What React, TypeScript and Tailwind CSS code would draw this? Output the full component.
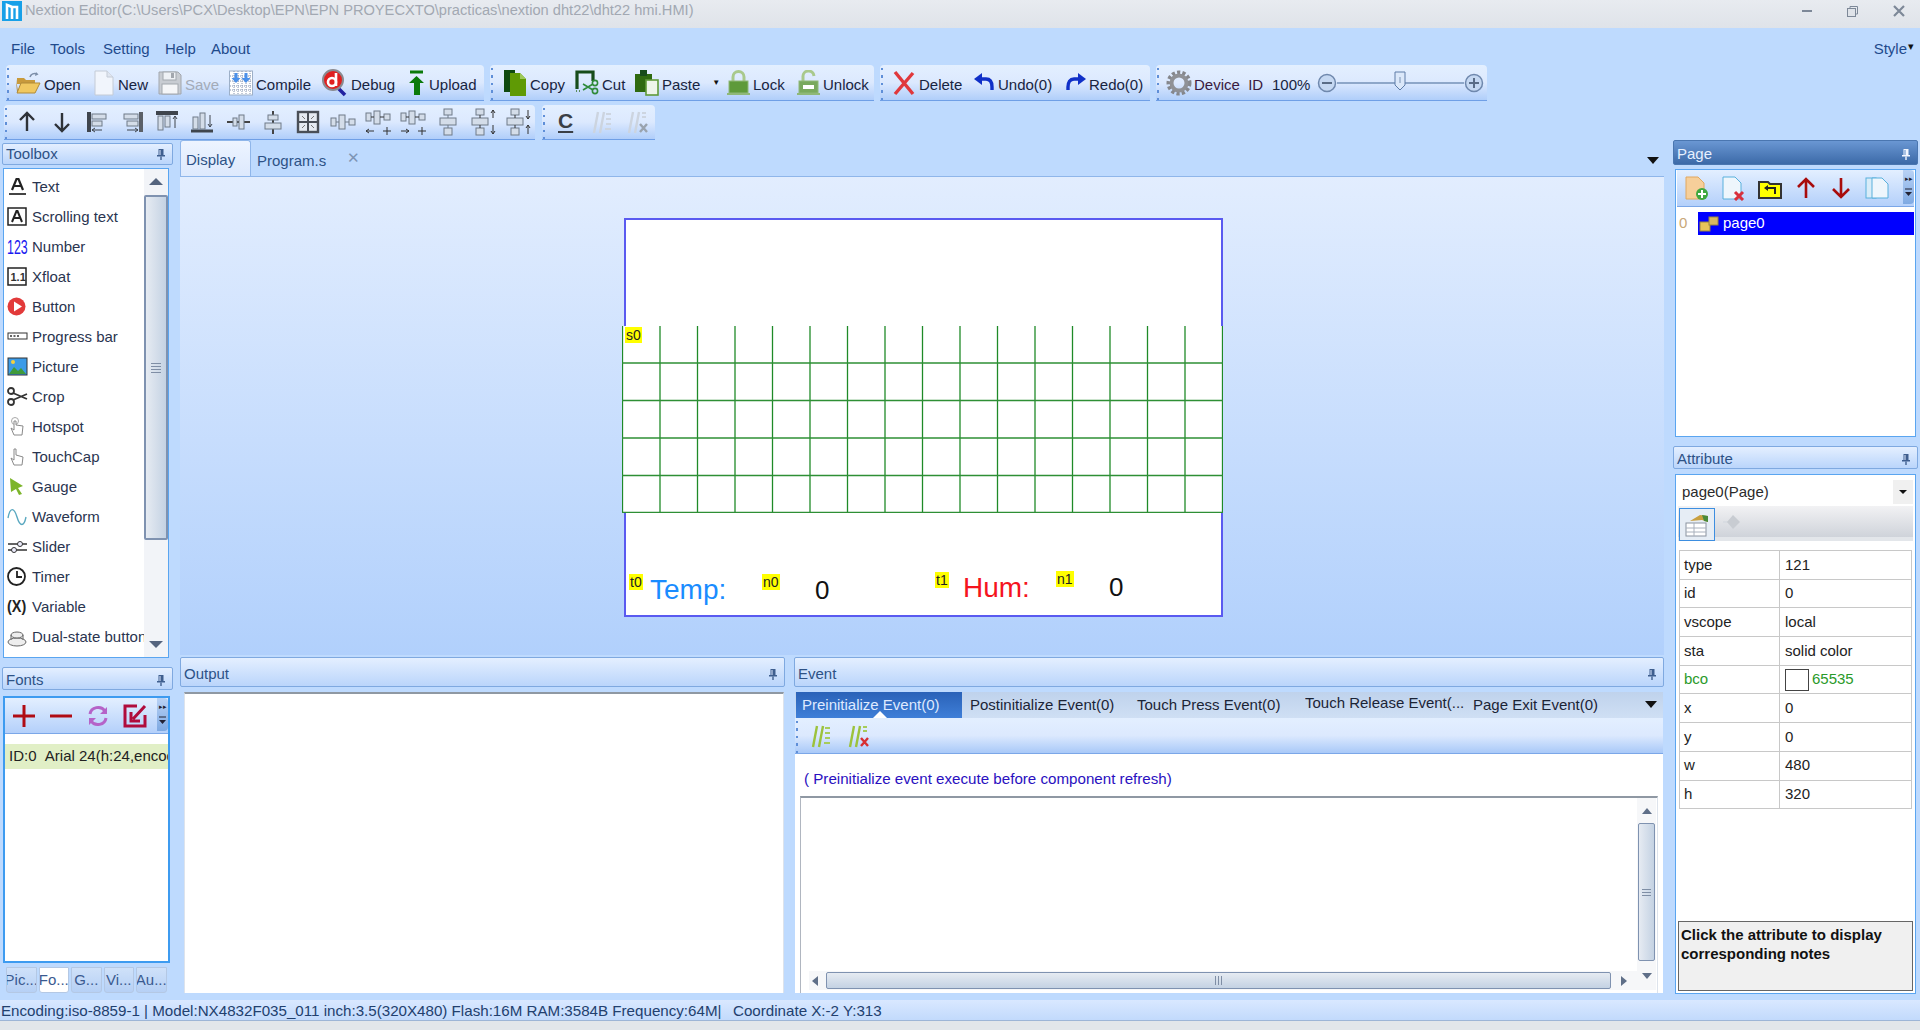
import type { ReactNode } from 'react';

const FONT = 'font-["Liberation_Sans",Arial,sans-serif]';

// ---- small helpers ----

function Svg({ w = 24, h = 24, vb, children, className }: { w?: number; h?: number; vb?: string; children: ReactNode; className?: string }) {
  return (
    <svg width={w} height={h} viewBox={vb ?? `0 0 ${w} ${h}`} fill="none" className={`shrink-0 ${className ?? ''}`}>
      {children}
    </svg>
  );
}

function Pin({ light }: { light?: boolean }) {
  const c = light ? '#f2f6ff' : '#3f5f8f';
  return (
    <Svg w={10} h={13}>
      <path d="M2.5 1h5v6h1.5v1.5H1V7h1.5z" fill={c} />
      <path d="M4 2v5" stroke={light ? '#5f8cc8' : '#dfeaff'} />
      <path d="M5 8.5V12" stroke={c} strokeWidth="1.4" />
    </Svg>
  );
}

function Grip() {
  return (
    <div className="flex flex-col gap-[5px] pt-[3px] pl-[1px] w-[6px] shrink-0">
      <i className="block w-[2px] h-[3px] bg-[#5f8fd8]" />
      <i className="block w-[2px] h-[3px] bg-[#5f8fd8]" />
      <i className="block w-[2px] h-[3px] bg-[#5f8fd8]" />
      <i className="block w-[2px] h-[3px] bg-[#5f8fd8]" />
      <i className="block w-[2px] h-[3px] bg-[#5f8fd8]" />
    </div>
  );
}

function Overflow() {
  return (
    <div className="absolute right-0 top-0 bottom-[2px] w-[11px] bg-gradient-to-b from-[#b9d2f5] to-[#7ea9e2] flex flex-col items-center pt-[5px] gap-[6px] rounded-r-sm">
      <span className="text-[7px] leading-[7px] text-[#223]">▸▸</span>
      <Svg w={7} h={9}>
        <path d="M0 1h7" stroke="#223" />
        <path d="M0 4h7L3.5 8z" fill="#223" />
      </Svg>
    </div>
  );
}

function PanelHead({ title, dark, className }: { title: string; dark?: boolean; className: string }) {
  return (
    <div
      className={`flex items-center justify-between pl-[3px] pr-[6px] rounded-[2px] border text-[15px] ${className} ${
        dark
          ? 'bg-gradient-to-b from-[#6a97d3] to-[#3c6aa8] border-[#4a76b0] text-[#e6f0ff]'
          : 'bg-gradient-to-b from-[#e4efff] to-[#bad5fb] border-[#7fa9e0] text-[#2d5286]'
      }`}
    >
      <span>{title}</span>
      <Pin light={dark} />
    </div>
  );
}

// ---- main toolbar icons ----

const OpenIcon = (
  <Svg w={26} h={24}>
    <path d="M15 6c1-3 4-4 7-3" stroke="#7c8ea8" strokeWidth="1.6" />
    <path d="M21 1l2.5 2.5L20 5z" fill="#7c8ea8" />
    <path d="M2 7h7l2 2h9v4H2z" fill="#c89a3c" />
    <path d="M2 21L1 8l2 13z" fill="#a87c28" />
    <path d="M6 12h19l-5 10H2z" fill="#f0c860" stroke="#b08a38" />
  </Svg>
);
const NewIcon = (
  <Svg w={22} h={28}>
    <path d="M2 2h12l6 6v18H2z" fill="#f1f5fc" stroke="#c4cbd6" />
    <path d="M14 2v6h6" fill="#e0e6f0" stroke="#c4cbd6" />
  </Svg>
);
const SaveIcon = (
  <Svg w={24} h={26}>
    <path d="M1 2h19l3 3v19H1z" fill="#c8ccd2" stroke="#a2a7ae" />
    <rect x="5" y="2" width="13" height="8" fill="#eef1f5" stroke="#a2a7ae" />
    <rect x="13" y="3" width="3" height="5" fill="#a2a7ae" />
    <rect x="4" y="14" width="16" height="10" fill="#f5f6f8" stroke="#a2a7ae" />
  </Svg>
);
const CompileIcon = (
  <Svg w={24} h={26}>
    <rect x="0.5" y="1" width="23" height="24" fill="#fff" stroke="#9db0c8" />
    <path d="M1 6h22M1 11h22M1 16h22M1 20h22M5 1v24M9 1v24M13 1v24M17 1v24M21 1v24" stroke="#8494b0" strokeDasharray="1 1" />
    <path d="M5.500 3h3v5h3l-4.500 5-4.500-5h3z" fill="#4a90ea" />
    <path d="M15.500 3h3v5h3l-4.500 5-4.500-5h3z" fill="#4a90ea" />
  </Svg>
);
const DebugIcon = (
  <Svg w={26} h={28}>
    <path d="M16 19l7 7" stroke="#2222a0" strokeWidth="3.5" />
    <circle cx="11" cy="11" r="10" fill="#e02020" stroke="#8a8a90" strokeWidth="2" />
    <circle cx="10" cy="13" r="4" stroke="#fff" strokeWidth="2.6" />
    <path d="M14 4v13" stroke="#fff" strokeWidth="2.6" />
  </Svg>
);
const UploadIcon = (
  <Svg w={18} h={26}>
    <path d="M2 2h13" stroke="#0a7a0a" strokeWidth="3" />
    <path d="M8.5 6L16 13h-4v12H6V13H1z" fill="#0a7a0a" />
  </Svg>
);
const CopyIcon = (
  <Svg w={24} h={28}>
    <rect x="1" y="1" width="11" height="22" fill="#0f4a10" />
    <path d="M7 4h10l6 6v17H7z" fill="#5f9a05" />
    <path d="M17 4v6h6" fill="#9ec95a" />
  </Svg>
);
const CutIcon = (
  <Svg w={24} h={26}>
    <path d="M2 19V2h16v9" stroke="#174c1a" strokeWidth="3.2" />
    <path d="M1 21h6" stroke="#5a8a5a" strokeDasharray="1 2" strokeWidth="2" />
    <circle cx="20" cy="21" r="2.6" stroke="#2f8a3a" strokeWidth="1.6" />
    <circle cx="20" cy="13" r="2.6" stroke="#2f8a3a" strokeWidth="1.6" />
    <path d="M18 14L8 20M18 20L8 14" stroke="#2f8a3a" strokeWidth="1.6" />
  </Svg>
);
const PasteIcon = (
  <Svg w={25} h={27}>
    <rect x="1" y="5" width="17" height="18" fill="#2f6a10" />
    <rect x="6" y="1" width="7" height="6" fill="#174c1a" />
    <rect x="12" y="11" width="12" height="15" fill="#eef5ea" stroke="#5f9a3a" strokeWidth="1.6" />
  </Svg>
);
const LockIcon = (
  <Svg w={23} h={26}>
    <path d="M6 12V7a5.5 5.5 0 0 1 11 0v5" stroke="#a9c98c" strokeWidth="3" />
    <rect x="2" y="11" width="19" height="12" fill="#5e9a3a" stroke="#8fb878" />
    <path d="M0 24h23" stroke="#8fb878" strokeWidth="2" />
  </Svg>
);
const UnlockIcon = (
  <Svg w={23} h={26}>
    <path d="M6 12V7a5.5 5.5 0 0 1 11-1" stroke="#a9c98c" strokeWidth="3" />
    <rect x="2" y="11" width="19" height="12" fill="#79a95e" stroke="#8fb878" />
    <rect x="6" y="15" width="11" height="4" fill="#fff" />
    <path d="M0 24h23" stroke="#8fb878" strokeWidth="2" />
  </Svg>
);
const DeleteIcon = (
  <Svg w={24} h={26}>
    <path d="M3 2l18 22M21 3L3 24" stroke="#e0383c" strokeWidth="3.4" />
  </Svg>
);
const UndoIcon = (
  <Svg w={21} h={21}>
    <path d="M5 7h7c4 0 6 3 6 8v3" stroke="#1030c8" strokeWidth="3.4" />
    <path d="M8 1v12L0 7z" fill="#1030c8" />
  </Svg>
);
const RedoIcon = (
  <Svg w={21} h={21}>
    <path d="M16 7H9C5 7 3 10 3 15v3" stroke="#1030c8" strokeWidth="3.4" />
    <path d="M13 1v12l8-6z" fill="#1030c8" />
  </Svg>
);
const GearIcon = (
  <Svg w={26} h={26}>
    <circle cx="13" cy="13" r="10" stroke="#85878c" strokeWidth="5" strokeDasharray="3 2" />
    <circle cx="13" cy="13" r="7.5" stroke="#8f9196" strokeWidth="4" />
  </Svg>
);

// ---- layout toolbar icons, all drawn on one 30x30 box ----

const BOX = { fill: '#d4dde9', stroke: '#6f7a88' };

function AlignIcon({ children }: { children: ReactNode }) {
  return <Svg w={30} h={30}>{children}</Svg>;
}

const layoutIcons: ReactNode[] = [
  <path key="a" d="M15 6v18M8 13l7-7 7 7" stroke="#2e3238" strokeWidth="2.4" />,
  <path key="b" d="M15 6v18M8 17l7 7 7-7" stroke="#2e3238" strokeWidth="2.4" />,
  <g key="c"><path d="M7 5v20" stroke="#3f454d" strokeWidth="4" /><rect x="10" y="7" width="14" height="5" {...BOX} /><rect x="10" y="14" width="10" height="5" {...BOX} /><path d="M10 23h10M10 23l3-2M10 23l3 2" stroke="#3f454d" /></g>,
  <g key="d"><path d="M24 5v20" stroke="#5b6068" strokeWidth="4" /><rect x="7" y="7" width="14" height="5" {...BOX} /><rect x="10" y="14" width="11" height="5" {...BOX} /><path d="M10 23h11M21 23l-3-2M21 23l-3 2" stroke="#3f454d" /></g>,
  <g key="e"><path d="M4 6h22" stroke="#3f454d" strokeWidth="4" /><rect x="6" y="9" width="5" height="14" {...BOX} /><rect x="13" y="9" width="5" height="11" {...BOX} /><path d="M23 9v12M23 9l-2 3M23 9l2 3" stroke="#3f454d" /></g>,
  <g key="f"><path d="M4 24h22" stroke="#3f454d" strokeWidth="3" /><rect x="6" y="10" width="5" height="12" {...BOX} /><rect x="13" y="6" width="5" height="16" {...BOX} /><path d="M23 8v12M23 20l-2-3M23 20l2-3" stroke="#3f454d" /></g>,
  <g key="g"><path d="M4 15h23" stroke="#444" strokeWidth="2" /><rect x="10" y="11" width="4" height="8" {...BOX} /><rect x="16" y="8" width="5" height="14" {...BOX} /></g>,
  <g key="h"><path d="M15 4v23" stroke="#444" strokeWidth="2" /><rect x="10" y="8" width="10" height="5" {...BOX} /><rect x="7" y="16" width="16" height="6" {...BOX} /></g>,
  <g key="i"><rect x="5" y="5" width="20" height="20" fill="#e6ebf2" stroke="#4a4f57" strokeWidth="2.4" /><path d="M15 6v18M6 15h18" stroke="#4a4f57" strokeWidth="2" /><path d="M9 9l3 3M21 9l-3 3M9 21l3-3M21 21l-3-3" stroke="#777" /></g>,
  <g key="j"><rect x="3" y="11" width="5" height="8" {...BOX} /><rect x="11" y="8" width="6" height="14" {...BOX} /><rect x="21" y="12" width="6" height="6" {...BOX} /><path d="M8 15h3M17 15h4" stroke="#6f7a88" /></g>,
  <g key="k"><rect x="3" y="6" width="5" height="8" {...BOX} /><rect x="11" y="4" width="6" height="13" {...BOX} /><rect x="21" y="7" width="6" height="6" {...BOX} /><path d="M8 10h3M17 10h4M3 24h8M3 24l3-2M3 24l3 2M20 24h8M24 20v8" stroke="#333" /></g>,
  <g key="l"><rect x="3" y="6" width="5" height="8" {...BOX} /><rect x="11" y="4" width="6" height="13" {...BOX} /><rect x="21" y="7" width="6" height="6" {...BOX} /><path d="M8 10h3M17 10h4M3 24h8M11 24l-3-2M11 24l-3 2M20 24h8M24 20v8" stroke="#333" /></g>,
  <g key="m"><rect x="11" y="2" width="8" height="6" {...BOX} /><rect x="7" y="11" width="16" height="7" {...BOX} /><rect x="11" y="21" width="8" height="7" {...BOX} /><path d="M15 8v3M15 18v3" stroke="#6f7a88" /></g>,
  <g key="n"><rect x="8" y="2" width="8" height="6" {...BOX} /><rect x="4" y="11" width="16" height="7" {...BOX} /><rect x="8" y="21" width="8" height="7" {...BOX} /><path d="M12 8v3M12 18v3M25 3v8M25 3l-2 3M25 3l2 3M25 18v9M25 27l-2-3M25 27l2-3" stroke="#333" /></g>,
  <g key="o"><rect x="8" y="2" width="8" height="6" {...BOX} /><rect x="4" y="11" width="16" height="7" {...BOX} /><rect x="8" y="21" width="8" height="7" {...BOX} /><path d="M12 8v3M12 18v3M25 3v9M25 12l-2-3M25 12l2-3M25 18v9M25 18l-2 3M25 18l2 3" stroke="#333" /></g>,
];

function CommentIcon({ off, clear }: { off?: boolean; clear?: boolean }) {
  const a = off ? '#ccd4df' : '#9cc23c';
  const b = off ? '#cdd5e0' : '#a7cc5a';
  return (
    <Svg w={26} h={26}>
      <path d="M6 24L10 3M12 24L16 3" stroke={a} strokeWidth="2.4" />
      {clear ? (
        <>
          <path d="M19 4h4M19 8h4" stroke={b} strokeWidth="2" />
          <path d="M17 15l7 8M24 15l-7 8" stroke={off ? '#9aa3ae' : '#d83030'} strokeWidth="2.4" />
        </>
      ) : (
        <path d="M18 5h5M18 10h5M18 15h5M17 20h6" stroke={b} strokeWidth="2" />
      )}
    </Svg>
  );
}

// ---- toolbox icons ----

const toolIcons: Record<string, ReactNode> = {
  Text: <Svg w={22} h={20}><path d="M5 13L9.500 2h2L16 13M7 9h7" stroke="#222" strokeWidth="2.2" /><path d="M2 17h17" stroke="#444" strokeWidth="2" /></Svg>,
  'Scrolling text': <Svg w={22} h={20}><rect x="1" y="1" width="18" height="17" stroke="#222" strokeWidth="1.5" /><path d="M5 15L9.500 4h1L15 15M7 11h6" stroke="#222" strokeWidth="2" /></Svg>,
  Number: <span className="w-[22px] shrink-0 text-[20px] leading-5 text-[#1a1af0] scale-x-[0.62] origin-left whitespace-nowrap">123</span>,
  Xfloat: <Svg w={22} h={20}><rect x="1" y="1" width="18" height="17" fill="#fff" stroke="#222" strokeWidth="1.5" /><text x="3.5" y="14" fontSize="11" fontWeight="700" fill="#333" fontFamily="Liberation Sans">1.1</text></Svg>,
  Button: <Svg w={22} h={20}><circle cx="9.500" cy="9.500" r="9" fill="#e23a3a" /><path d="M7 4.500l8 5-8 5z" fill="#fff" /></Svg>,
  'Progress bar': <Svg w={22} h={20}><rect x="1" y="6" width="19" height="6" fill="#fff" stroke="#333" /><path d="M3 9h10" stroke="#333" strokeDasharray="2 1.500" strokeWidth="1.500" /></Svg>,
  Picture: <Svg w={22} h={20}><rect x="1" y="1" width="19" height="17" fill="#3b9be8" stroke="#333" /><path d="M2 17l5-7 4 4 3-3 5 6z" fill="#3f9a3a" /><circle cx="6" cy="5" r="2" fill="#f4d03f" /></Svg>,
  Crop: <Svg w={22} h={20}><circle cx="4" cy="4" r="3" stroke="#333" strokeWidth="1.800" /><circle cx="4" cy="15" r="3" stroke="#333" strokeWidth="1.800" /><path d="M6 6l14 6M6 13l14-6" stroke="#333" strokeWidth="1.800" /></Svg>,
  Hotspot: <Svg w={22} h={20}><circle cx="8" cy="4" r="3.500" stroke="#a8a8a8" /><path d="M7 4v9l-3-2 3 7h8l1-9-7-1V4z" fill="#fff" stroke="#8a8a8a" /></Svg>,
  TouchCap: <Svg w={22} h={20}><path d="M7 2v11l-3-2 3 7h8l1-8-7-2V2z" fill="#fff" stroke="#8a8a8a" /></Svg>,
  Gauge: <Svg w={22} h={20}><path d="M3 1l13 8-5 2 4 6-3 1-3-6-5 3z" fill="#7cb52a" /></Svg>,
  Waveform: <Svg w={22} h={20}><path d="M1 11C3 0 7 0 10 10s7 10 9 0" stroke="#5aa8c0" strokeWidth="1.400" /></Svg>,
  Slider: <Svg w={22} h={20}><path d="M1 7h19M1 13h19" stroke="#333" strokeWidth="1.400" /><circle cx="13" cy="7" r="2.500" fill="#eef" stroke="#333" /><circle cx="7" cy="13" r="2.500" fill="#eef" stroke="#333" /></Svg>,
  Timer: <Svg w={22} h={20}><circle cx="9.500" cy="9.500" r="8.500" stroke="#222" strokeWidth="1.800" /><path d="M10 4v6h5" stroke="#222" strokeWidth="1.800" /></Svg>,
  Variable: <span className="w-[22px] shrink-0 text-[16px] leading-5 font-bold text-[#222] scale-x-[0.9] origin-left whitespace-nowrap">(X)</span>,
  'Dual-state button': <Svg w={22} h={20}><ellipse cx="10" cy="15" rx="9" ry="4" fill="#eee" stroke="#666" /><ellipse cx="10" cy="8" rx="6" ry="3" fill="#eee" stroke="#666" /><path d="M4 8v5M16 8v5" stroke="#666" /></Svg>,
};

// ---- bars ----

function Toolbar({ children, className }: { children: ReactNode; className: string }) {
  return (
    <div className={`flex items-stretch rounded-t-[4px] bg-gradient-to-b from-[#e3efff] via-[#dce9fe] to-[#b0cefa] border-b border-[#6f9fe6] ${className}`}>
      {children}
    </div>
  );
}

function TbItem({ icon, label, w, off, extra }: { icon: ReactNode; label: string; w: string; off?: boolean; extra?: ReactNode }) {
  return (
    <div className={`flex items-center gap-[3px] ${w}`}>
      {icon}
      <span className={`pt-[5px] ${off ? 'text-[#a3abb8]' : 'text-[#182440]'}`}>{label}</span>
      {extra}
    </div>
  );
}

function TitleBar() {
  return (
    <div className="h-[28px] shrink-0 flex items-center pb-[6px] bg-gradient-to-b from-[#e8ebf0] to-[#dfe3e9] text-[14.650px] text-[#a2a8b2]">
      <Svg w={22} h={24} className="ml-[1px]">
        <rect x="1" y="2" width="20" height="20" fill="#18a0e8" />
        <path d="M6 20V6l5 2v12M11 8h5v12" stroke="#fff" strokeWidth="2.6" />
      </Svg>
      <span className="ml-[2px] whitespace-nowrap">Nextion Editor(C:\Users\PCX\Desktop\EPN\EPN PROYECXTO\practicas\nextion dht22\dht22 hmi.HMI)</span>
      <div className="ml-auto flex items-center gap-[35px] pr-[15px]">
        <i className="block w-[10px] h-[2px] bg-[#7d8898]" />
        <Svg w={11} h={11}>
          <rect x="0.500" y="2.500" width="8" height="8" fill="#dfe3e9" stroke="#7d8898" />
          <path d="M3 2.500V.500h7.500V8H8.500" stroke="#7d8898" />
        </Svg>
        <Svg w={12} h={12}>
          <path d="M1 1l10 10M11 1L1 11" stroke="#7d8898" strokeWidth="2.200" />
        </Svg>
      </div>
    </div>
  );
}

function MenuBar() {
  return (
    <div className="h-[37px] shrink-0 flex items-center pl-[11px] pr-[5px] text-[15px] text-[#1f4a8c] pt-[5px]">
      <span className="w-[39px]">File</span>
      <span className="w-[53px]">Tools</span>
      <span className="w-[62px]">Setting</span>
      <span className="w-[46px]">Help</span>
      <span>About</span>
      <span className="ml-auto">Style</span>
      <span className="text-[11px] text-[#111] -mt-[5px] ml-[1px] mr-[1px]">▾</span>
    </div>
  );
}

function MainTools() {
  return (
    <div className="h-[36px] shrink-0 flex gap-[6px] pl-[6px] text-[15px]">
      <Toolbar className="w-[478px]">
        <Grip />
        <div className="flex items-center pl-[3px]">
          <TbItem icon={OpenIcon} label="Open" w="w-[78px]" />
          <TbItem icon={NewIcon} label="New" w="w-[65px]" />
          <TbItem icon={SaveIcon} label="Save" w="w-[71px]" off />
          <TbItem icon={CompileIcon} label="Compile" w="w-[93px]" />
          <TbItem icon={DebugIcon} label="Debug" w="w-[86px]" />
          <TbItem icon={UploadIcon} label="Upload" w="w-[72px]" />
        </div>
      </Toolbar>
      <Toolbar className="w-[384px]">
        <Grip />
        <div className="flex items-center pl-[7px]">
          <TbItem icon={CopyIcon} label="Copy" w="w-[72px]" />
          <TbItem icon={CutIcon} label="Cut" w="w-[59px]" />
          <TbItem
            icon={PasteIcon}
            label="Paste"
            w="w-[93px]"
            extra={<span className="ml-[9px] text-[8px] text-[#111]">▼</span>}
          />
          <TbItem icon={LockIcon} label="Lock" w="w-[70px]" />
          <TbItem icon={UnlockIcon} label="Unlock" w="w-[72px]" />
        </div>
      </Toolbar>
      <Toolbar className="w-[270px]">
        <Grip />
        <div className="flex items-center pl-[6px]">
          <TbItem icon={DeleteIcon} label="Delete" w="w-[82px]" />
          <TbItem icon={UndoIcon} label="Undo(0)" w="w-[91px]" />
          <TbItem icon={RedoIcon} label="Redo(0)" w="w-[82px]" />
        </div>
      </Toolbar>
      <Toolbar className="w-[331px]">
        <Grip />
        <div className="flex items-center pl-[4px] flex-1 text-[#182440]">
          <div className="flex items-center w-[106px]">
            {GearIcon}
            <span className="ml-[2px] pt-[5px] text-[#3a1a40]">Device&nbsp;&nbsp;ID</span>
          </div>
          <span className="pt-[5px]">100%</span>
          <Slider />
        </div>
      </Toolbar>
    </div>
  );
}

function ZoomBtn({ plus }: { plus?: boolean }) {
  return (
    <Svg w={20} h={20}>
      <circle cx="10" cy="10" r="8.500" fill="#c5d8f2" stroke="#6f88ad" strokeWidth="1.500" />
      <path d={plus ? 'M5 10h10M10 5v10' : 'M5 10h10'} stroke="#5a6c86" strokeWidth="2" />
    </Svg>
  );
}

function Slider() {
  return (
    <div className="flex items-center ml-[7px] relative">
      <ZoomBtn />
      <div className="w-[127px] h-[2px] bg-[#8ea7c9]" />
      <ZoomBtn plus />
      <svg width="12" height="20" viewBox="0 0 12 20" className="absolute left-[77px] top-[-2px]">
        <path d="M1 1h10v13l-5 5-5-5z" fill="#dbe8fa" stroke="#5f7da8" />
        <path d="M6 6v6" stroke="#7d94b5" />
      </svg>
    </div>
  );
}

function LayoutTools() {
  return (
    <div className="h-[35px] shrink-0 mt-[4px] flex gap-[7px] pl-[4px]">
      <Toolbar className="w-[531px]">
        <Grip />
        <div className="flex items-center pl-[2px] gap-[5.100px]">
          {layoutIcons.map((icon, i) => (
            <AlignIcon key={i}>{icon}</AlignIcon>
          ))}
        </div>
      </Toolbar>
      <Toolbar className="w-[113px]">
        <Grip />
        <div className="flex items-center pl-[10px]">
          <span className="w-[30px] -mt-[2px] text-[21px] font-bold text-[#3a3f46] underline underline-offset-[3px]">C</span>
          <CommentIcon off />
          <span className="w-[9px]" />
          <CommentIcon off clear />
        </div>
      </Toolbar>
    </div>
  );
}

// ---- left column ----

const TOOLS = ['Text', 'Scrolling text', 'Number', 'Xfloat', 'Button', 'Progress bar', 'Picture', 'Crop', 'Hotspot', 'TouchCap', 'Gauge', 'Waveform', 'Slider', 'Timer', 'Variable', 'Dual-state button'];

function Toolbox() {
  return (
    <div className="h-[490px] ml-[3px] mt-[3px] w-[166px] border border-[#5aa5f0] bg-white flex overflow-hidden text-[15px] text-[#2a3550]">
      <div className="w-[140px] pt-[3px] pl-[3px] overflow-hidden shrink-0">
        {TOOLS.map((t) => (
          <div key={t} className="h-[30px] flex items-center whitespace-nowrap">
            {toolIcons[t]}
            <span className="ml-[3px]">{t}</span>
          </div>
        ))}
      </div>
      <div className="flex-1 flex flex-col items-center bg-[#f2f4f8] py-[9px]">
        <i className="block border-x-[7px] border-x-transparent border-b-[7px] border-b-[#55647e]" />
        <div className="w-[24px] h-[345px] mt-[10px] rounded-[2px] border-2 border-[#7f92b0] bg-gradient-to-r from-[#e6ebf2] to-[#c4d2e3] flex flex-col items-center justify-center gap-[2px]">
          <i className="block w-[10px] h-px bg-[#7f8ea5]" />
          <i className="block w-[10px] h-px bg-[#7f8ea5]" />
          <i className="block w-[10px] h-px bg-[#7f8ea5]" />
          <i className="block w-[10px] h-px bg-[#7f8ea5]" />
        </div>
        <i className="mt-auto block border-x-[7px] border-x-transparent border-t-[7px] border-t-[#55647e]" />
      </div>
    </div>
  );
}

function Fonts() {
  return (
    <div className="ml-[3px] mt-[6px] w-[167px] h-[267px] border-2 border-[#3d9bf0] bg-white flex flex-col">
      <div className="h-[36px] shrink-0 relative flex items-center gap-[13px] pl-[7px] bg-gradient-to-b from-[#e3efff] to-[#b4d0fa] border-b border-[#7ba7e8]">
        <Svg w={24} h={24}><path d="M12 1v22M1 12h22" stroke="#b00c14" strokeWidth="3" /></Svg>
        <Svg w={24} h={24}><path d="M1 12h22" stroke="#b00c14" strokeWidth="3" /></Svg>
        <Svg w={24} h={24}>
          <path d="M4 10c1-7 11-9 15-3M20 14c-1 7-11 9-15 3" stroke="#b563c8" strokeWidth="3" />
          <path d="M21 3v7h-7M3 21v-7h7" fill="#b563c8" />
        </Svg>
        <Svg w={24} h={24}>
          <path d="M14 2H2v20h20V11" stroke="#b00c3c" strokeWidth="3" />
          <path d="M22 2L10 15M8 8v9h9" stroke="#b00c3c" strokeWidth="3" />
        </Svg>
        <Overflow />
      </div>
      <div className="mt-[10px] h-[25px] bg-[#e1efc6] flex items-center pl-[4px] text-[15px] text-[#222] whitespace-nowrap overflow-hidden">
        ID:0&nbsp;&nbsp;Arial 24(h:24,encoding:iso
      </div>
    </div>
  );
}

function FontTabs() {
  const tabs = ['Pic...', 'Fo...', 'G...', 'Vi...', 'Au...'];
  return (
    <div className="ml-[6px] mt-[4px] h-[27px] flex gap-[2px] text-[15px] text-[#3a5a90]">
      {tabs.map((t) => (
        <div
          key={t}
          className={`w-[30.500px] h-[26px] rounded-b-[3px] border border-[#b4c8e4] flex items-center justify-center overflow-hidden ${
            t === 'Fo...' ? 'bg-white' : 'bg-gradient-to-b from-[#cfe1f9] to-[#b6d0f5]'
          }`}
        >
          {t}
        </div>
      ))}
    </div>
  );
}

function LeftColumn() {
  return (
    <div className="w-[180px] shrink-0 pt-[3px]">
      <PanelHead title="Toolbox" className="ml-[2px] w-[171px] h-[22px]" />
      <Toolbox />
      <PanelHead title="Fonts" className="ml-[2px] mt-[9px] w-[171px] h-[23px] pt-[3px]" />
      <Fonts />
      <FontTabs />
    </div>
  );
}

// ---- canvas ----

function Tag({ text, className }: { text: string; className: string }) {
  return (
    <span className={`absolute bg-[#ffff00] text-[14px] leading-[16px] px-[1px] text-[#222] ${className}`}>{text}</span>
  );
}

function Waveform() {
  const xs = Array.from({ length: 17 }, (_, i) => 0.5 + i * 37.5);
  const ys = [37, 74.5, 112, 149.5, 186.5];
  return (
    <svg width="601" height="187" viewBox="0 0 601 187" className="absolute left-[-4px] top-[106px] bg-white">
      {xs.map((x) => (
        <path key={x} d={`M${x} 0V187`} stroke="#1f8a28" strokeWidth="1.300" />
      ))}
      {ys.map((y) => (
        <path key={y} d={`M0 ${y}H601`} stroke="#2e8f35" strokeWidth="1.300" />
      ))}
    </svg>
  );
}

function Canvas() {
  return (
    <div className="relative ml-[444px] mt-[41px] w-[599px] h-[399px] bg-white border-2 border-[#5a5af0]">
      <Waveform />
      <Tag text="s0" className="left-[-1px] top-[107px]" />
      <Tag text="t0" className="left-[3px] top-[354px]" />
      <span className="absolute left-[24px] top-[353px] text-[28px] leading-[34px] text-[#1a8cff]">Temp:</span>
      <Tag text="n0" className="left-[136px] top-[354px]" />
      <span className="absolute left-[189px] top-[355px] text-[26px] leading-[30px] text-[#111]">0</span>
      <Tag text="t1" className="left-[309px] top-[352px]" />
      <span className="absolute left-[337px] top-[351px] text-[28px] leading-[34px] text-[#f5141e]">Hum:</span>
      <Tag text="n1" className="left-[430px] top-[351px]" />
      <span className="absolute left-[483px] top-[352px] text-[26px] leading-[30px] text-[#111]">0</span>
    </div>
  );
}

function CenterTabs() {
  return (
    <div className="h-[37px] shrink-0 pt-[1px] flex items-end border-b border-[#8fb6ea] relative text-[15px] text-[#2d5286]">
      <div className="w-[71px] h-[36px] rounded-t-[3px] border border-b-0 border-[#8fb6ea] bg-gradient-to-b from-[#edf4ff] to-[#dde9fd] flex items-center pl-[5px] pt-[3px]">
        Display
      </div>
      <span className="ml-[6px] pb-[4px]">Program.s</span>
      <span className="ml-[21px] pb-[7px] text-[#7d94b5]">✕</span>
      <i className="absolute right-[5px] top-[17px] block border-x-[6px] border-x-transparent border-t-[7px] border-t-[#111]" />
    </div>
  );
}

// ---- output and event ----

function Output() {
  return (
    <div className="w-[605px] shrink-0 flex flex-col">
      <PanelHead title="Output" className="h-[30px] pt-[5px]" />
      <div className="ml-[4px] mt-[5px] w-[600px] h-[301px] bg-white border-t-2 border-x border-[#8f98a3] border-x-[#dde3ec]" />
    </div>
  );
}

function EventTabs() {
  return (
    <div className="h-[26px] flex items-center bg-gradient-to-b from-[#bfd2ec] to-[#cfdff4] text-[15px] text-[#1b2436] relative">
      <div className="ml-[1px] w-[166px] h-[26px] bg-gradient-to-b from-[#2a62b8] to-[#3f7fd8] text-[#dfeaff] pl-[6px] flex items-center relative">
        Preinitialize Event(0)
        <i className="absolute left-[77px] bottom-0 block border-x-[7px] border-x-transparent border-b-[7px] border-b-white" />
      </div>
      <span className="ml-[8px] w-[167px]">Postinitialize Event(0)</span>
      <span className="w-[168px]">Touch Press Event(0)</span>
      <span className="w-[168px] -mt-[3px] whitespace-nowrap overflow-hidden">Touch Release Event(...</span>
      <span>Page Exit Event(0)</span>
      <i className="absolute right-[6px] top-[9px] block border-x-[6px] border-x-transparent border-t-[7px] border-t-[#111]" />
    </div>
  );
}

function EditorBox() {
  return (
    <div className="ml-[5px] mt-[7px] w-[858px] h-[197px] border-t-2 border-l border-r border-[#8f98a3] border-l-[#b0b6c0] border-r-[#dde3ec] relative flex flex-col">
      <div className="absolute right-[1px] top-0 bottom-[3px] w-[19px] flex flex-col items-center pt-[10px] bg-[#f6f7f9]">
        <i className="block border-x-[5px] border-x-transparent border-b-[6px] border-b-[#5f6f88]" />
        <div className="mt-[9px] w-[17px] h-[138px] rounded-[2px] border border-[#7f92b0] bg-gradient-to-r from-[#e6ebf2] to-[#c4d2e3] flex flex-col items-center justify-center gap-[2px]">
          <i className="block w-[9px] h-px bg-[#7f8ea5]" />
          <i className="block w-[9px] h-px bg-[#7f8ea5]" />
          <i className="block w-[9px] h-px bg-[#7f8ea5]" />
        </div>
        <i className="mt-[12px] block border-x-[5px] border-x-transparent border-t-[6px] border-t-[#5f6f88]" />
      </div>
      <div className="mt-auto mb-[3px] ml-[8px] w-[828px] h-[19px] flex items-center bg-[#f6f7f9]">
        <i className="ml-[3px] block border-y-[5px] border-y-transparent border-r-[6px] border-r-[#5f6f88]" />
        <div className="ml-[8px] w-[785px] h-[17px] rounded-[2px] border border-[#7f92b0] bg-gradient-to-b from-[#e6ebf2] to-[#c4d2e3] flex items-center justify-center gap-[2px]">
          <i className="block h-[9px] w-px bg-[#7f8ea5]" />
          <i className="block h-[9px] w-px bg-[#7f8ea5]" />
          <i className="block h-[9px] w-px bg-[#7f8ea5]" />
        </div>
        <i className="ml-[10px] block border-y-[5px] border-y-transparent border-l-[6px] border-l-[#5f6f88]" />
      </div>
    </div>
  );
}

function EventPanel() {
  return (
    <div className="w-[870px] shrink-0 flex flex-col">
      <PanelHead title="Event" className="h-[30px] pt-[4px]" />
      <div className="mt-[5px] ml-[1px] w-[868px] h-[301px] bg-white flex flex-col">
        <EventTabs />
        <div className="h-[36px] flex items-stretch bg-gradient-to-b from-[#e3efff] via-[#dce9fe] to-[#a9c9f8] border-b border-[#7ba7e8]">
          <Grip />
          <div className="flex items-center pl-[6px] gap-[11px]">
            <CommentIcon />
            <CommentIcon clear />
          </div>
        </div>
        <div className="mt-[15px] ml-[9px] h-[20px] text-[15.150px] leading-[20px] text-[#2a10c0]">
          ( Preinitialize event execute before component refresh)
        </div>
        <EditorBox />
      </div>
    </div>
  );
}

// ---- right column ----

function PageTools() {
  return (
    <div className="h-[37px] relative flex items-center gap-[13px] pl-[7px] bg-gradient-to-b from-[#e3efff] to-[#b4d0fa] border-b border-[#7ba7e8] mx-[1px]">
      <Svg w={24} h={26}>
        <path d="M2 2h12l6 6v16H2z" fill="#f6cf9a" stroke="#e0a860" />
        <circle cx="18" cy="19" r="6" fill="#3fa83f" />
        <path d="M18 15v8M14 19h8" stroke="#fff" strokeWidth="2" />
      </Svg>
      <Svg w={24} h={26}>
        <path d="M2 2h12l6 6v16H2z" fill="#eef6fc" stroke="#58b0dc" />
        <path d="M14 17l8 8M22 17l-8 8" stroke="#d8303c" strokeWidth="3" />
      </Svg>
      <Svg w={24} h={24}>
        <path d="M1 6h9l2 2h11v14H1z" fill="#ffff00" stroke="#333" strokeWidth="2" />
        <path d="M10 9l-4 3 4 3v-2h6v5h2v-7h-8z" fill="#222" />
      </Svg>
      <Svg w={22} h={24}><path d="M11 22V3M3 11l8-8 8 8" stroke="#a80c0c" strokeWidth="2.600" /></Svg>
      <Svg w={22} h={24}><path d="M11 2v19M3 13l8 8 8-8" stroke="#a80c0c" strokeWidth="2.600" /></Svg>
      <Svg w={24} h={24}>
        <rect x="1" y="2" width="10" height="20" fill="#d8ecf8" stroke="#58b0dc" />
        <path d="M7 2h10l6 6v14H7z" fill="#eef6fc" stroke="#58b0dc" />
      </Svg>
      <Overflow />
    </div>
  );
}

function PagePanel() {
  return (
    <div className="ml-[2px] mt-[4px] w-[241px] h-[268px] border border-[#5aa5f0] bg-white flex flex-col text-[15px]">
      <PageTools />
      <div className="mt-[5px] flex items-center h-[23px]">
        <span className="w-[22px] pl-[3px] text-[#c8a878]">0</span>
        <div className="flex-1 mr-[1px] h-[23px] bg-[#0000ff] text-white flex items-center pl-[1px]">
          <Svg w={20} h={16}>
            <rect x="1" y="6" width="10" height="9" fill="#e8c45a" stroke="#9a8440" />
            <rect x="10" y="1" width="9" height="8" fill="#d8b860" stroke="#9a8440" />
          </Svg>
          <span className="ml-[4px]">page0</span>
        </div>
      </div>
    </div>
  );
}

const ATTRS: [string, string][] = [
  ['type', '121'],
  ['id', '0'],
  ['vscope', 'local'],
  ['sta', 'solid color'],
  ['bco', '65535'],
  ['x', '0'],
  ['y', '0'],
  ['w', '480'],
  ['h', '320'],
];

function AttrPanel() {
  return (
    <div className="ml-[2px] mt-[5px] w-[241px] h-[520px] border border-[#5aa5f0] bg-white flex flex-col text-[15px] text-[#222]">
      <div className="h-[31px] flex items-center justify-between pl-[6px] pt-[3px]">
        <span className="text-[#2b2b2b]">page0(Page)</span>
        <div className="w-[20px] h-[24px] mr-[2px] bg-[#f0f0f0] flex items-center justify-center">
          <i className="block border-x-[4px] border-x-transparent border-t-[4px] border-t-[#111]" />
        </div>
      </div>
      <div className="h-[35px] mx-[2px] flex items-start gap-[4px] bg-gradient-to-b from-[#f2f2f4] to-[#cfd3da] border-b-4 border-[#e3e6ea]">
        <div className="w-[36px] h-[33px] ml-[1px] mt-[2px] border border-[#3d8ee0] bg-[#e6edf5] flex items-center justify-center relative z-10">
          <Svg w={26} h={24}>
            <rect x="2" y="10" width="20" height="13" fill="#fff" stroke="#8a93a0" />
            <path d="M2 15h20M2 19h20M10 10v13" stroke="#a8b0bc" />
            <path d="M6 8l10-6 8 1v6l-6-2z" fill="#c9a040" />
            <path d="M18 2l6 1v6l-4-1z" fill="#4a8a3a" />
          </Svg>
        </div>
        <Svg w={24} h={24} className="mt-[6px]">
          <path d="M4 10h8" stroke="#d8dce2" strokeWidth="2" />
          <path d="M14 3l7 7-7 7-6-7z" fill="#c8ccd2" />
        </Svg>
      </div>
      <div className="mt-[9px] mx-[3px] border border-[#c8c8c8] border-b-0 text-[15px]">
        {ATTRS.map(([k, v]) => (
          <div key={k} className={`h-[28.700px] flex items-center border-b border-[#c8c8c8] ${k === 'bco' ? 'text-[#2a9a2a]' : ''}`}>
            <span className="w-[100px] pl-[4px] h-full flex items-center border-r border-[#c8c8c8]">{k}</span>
            <span className="pl-[5px] flex items-center gap-[3px]">
              {k === 'bco' && <i className="block w-[24px] h-[22px] bg-white border border-[#444]" />}
              {v}
            </span>
          </div>
        ))}
      </div>
      <div className="mt-auto mx-[2px] mb-[2px] h-[70px] bg-[#f0f0f0] border border-[#666] px-[2px] pt-[3px] font-bold text-[15px] leading-[19px] text-[#111]">
        Click the attribute to display corresponding notes
      </div>
    </div>
  );
}

function RightColumn() {
  return (
    <div className="w-[247px] shrink-0 ml-[9px]">
      <PanelHead dark title="Page" className="ml-0 w-[245px] h-[25px] pt-[4px]" />
      <PagePanel />
      <PanelHead title="Attribute" className="mt-[9px] w-[245px] h-[23px] pt-[4px]" />
      <AttrPanel />
    </div>
  );
}

export default function App() {
  return (
    <div className={`w-[1920px] h-[1030px] overflow-hidden flex flex-col bg-[#bedafe] ${FONT}`}>
      <TitleBar />
      <MenuBar />
      <MainTools />
      <LayoutTools />
      <div className="flex-1 flex min-h-0">
        <LeftColumn />
        <div className="w-[1484px] shrink-0 flex flex-col">
          <CenterTabs />
          <div className="h-[478px] shrink-0 bg-gradient-to-b from-[#e2edfe] to-[#b1d0fc]">
            <Canvas />
          </div>
          <div className="mt-[2px] flex gap-[9px]">
            <Output />
            <EventPanel />
          </div>
        </div>
        <RightColumn />
      </div>
      <div className="h-[21px] shrink-0 flex items-center pl-[1px] pt-[2px] bg-gradient-to-b from-[#d9e8ff] to-[#c2dafc] border-b border-[#9db5d6] text-[15.150px] text-[#22406e] whitespace-nowrap">
        <span className="w-[732px]">Encoding:iso-8859-1 | Model:NX4832F035_011 inch:3.5(320X480) Flash:16M RAM:3584B Frequency:64M|</span>
        <span>Coordinate X:-2 Y:313</span>
      </div>
      <div className="h-[9px] shrink-0 bg-[#e2e6ea]" />
    </div>
  );
}
